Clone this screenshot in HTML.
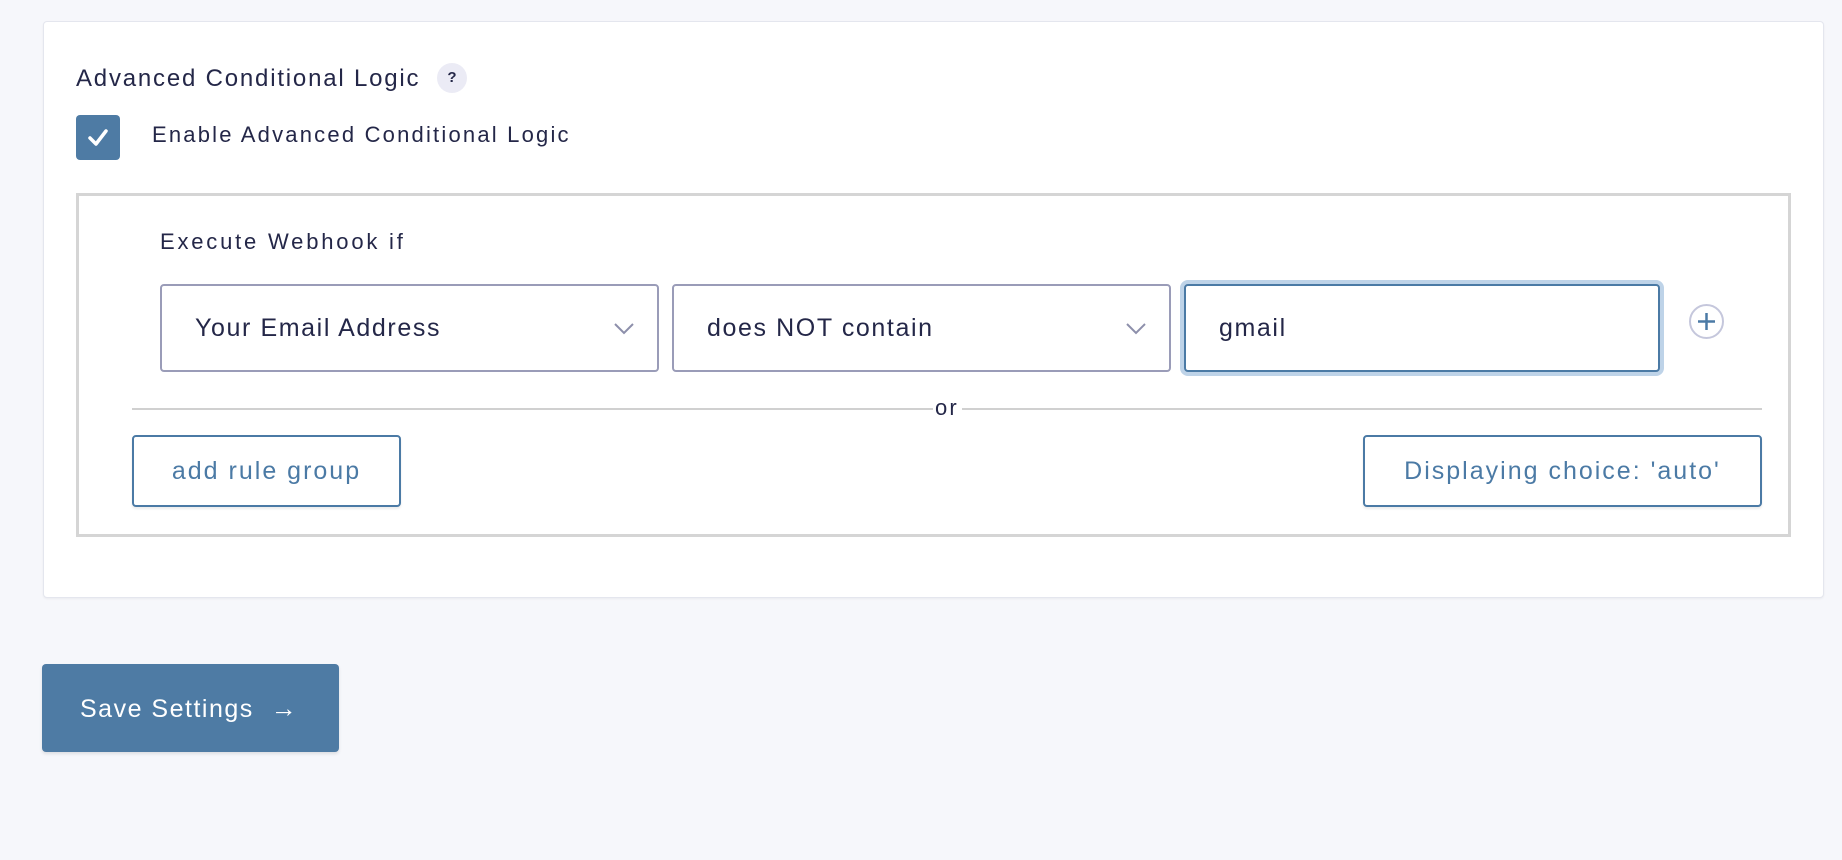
<!DOCTYPE html>
<html><head><style>
*{box-sizing:border-box;margin:0;padding:0}
body{width:1842px;height:860px;background:#f6f7fb;font-family:"Liberation Sans",sans-serif;color:#242748;position:relative;overflow:hidden}
.abs{position:absolute}
.card{left:43px;top:21px;width:1781px;height:577px;background:#fff;border:1px solid #e4e6ee;border-radius:4px;box-shadow:0 1px 2px rgba(0,0,0,.05)}
.t{font-size:22px;white-space:nowrap;letter-spacing:2.2px}
.sel{height:88px;border:2px solid #9a9cb8;border-radius:4px;background:#fff;font-size:25px;padding-left:33px;line-height:84px;letter-spacing:1.6px}
.btn{border:2px solid #4b7aa5;border-radius:4px;color:#4b7aa5;font-size:25px;text-align:center;background:#fff;box-shadow:0 2px 2px rgba(0,0,0,.08);letter-spacing:2px}
</style></head><body>
<div class="abs card"></div>
<div class="abs t" style="left:76px;top:65px;font-size:24px;letter-spacing:1.8px">Advanced Conditional Logic</div>
<div class="abs" style="left:437px;top:63px;width:30px;height:30px;border-radius:50%;background:#ebebf5;font-size:15px;font-weight:bold;text-align:center;line-height:30px">?</div>
<div class="abs" style="left:76px;top:115px;width:44px;height:45px;background:#4e7ba4;border-radius:4px"><svg width="44" height="45"><path d="M14 23 L20 29 L30 16" stroke="#fff" stroke-width="3.5" fill="none" stroke-linecap="round" stroke-linejoin="round"/></svg></div>
<div class="abs t" style="left:152px;top:122px">Enable Advanced Conditional Logic</div>
<div class="abs" style="left:76px;top:193px;width:1715px;height:344px;border:3px solid #d5d5d5"></div>
<div class="abs t" style="left:160px;top:229px;letter-spacing:2.8px">Execute Webhook if</div>
<div class="abs sel" style="left:160px;top:284px;width:499px">Your Email Address<svg class="abs" style="right:22px;top:36px" width="22" height="14"><path d="M2 2 L11 11 L20 2" stroke="#8d8fab" stroke-width="2" fill="none"/></svg></div>
<div class="abs sel" style="left:672px;top:284px;width:499px">does NOT contain<svg class="abs" style="right:22px;top:36px" width="22" height="14"><path d="M2 2 L11 11 L20 2" stroke="#8d8fab" stroke-width="2" fill="none"/></svg></div>
<div class="abs sel" style="left:1184px;top:284px;width:476px;border-color:#4b7aa5;box-shadow:0 0 0 4px #bed3e8">gmail</div>
<div class="abs" style="left:1689px;top:304px;width:35px;height:35px;border-radius:50%;border:2px solid #c5c7dc;"><svg width="31" height="31"><path d="M15.5 7V24M7 15.5H24" stroke="#4b7aa5" stroke-width="2.5"/></svg></div>
<div class="abs" style="left:132px;top:408px;width:801px;height:2px;background:#d0d0d0"></div>
<div class="abs" style="left:962px;top:408px;width:800px;height:2px;background:#d0d0d0"></div>
<div class="abs t" style="left:935px;top:395px">or</div>
<div class="abs btn" style="left:132px;top:435px;width:269px;height:72px;line-height:68px">add rule group</div>
<div class="abs btn" style="left:1363px;top:435px;width:399px;height:72px;line-height:68px">Displaying choice: 'auto'</div>
<div class="abs" style="left:42px;top:664px;width:297px;height:88px;background:#4e7ba4;border-radius:4px;color:#fff;font-size:25px;line-height:88px;padding-left:38px;letter-spacing:1.5px;box-shadow:0 2px 3px rgba(0,0,0,.1)">Save Settings &nbsp;<span style="font-size:26px">→</span></div>
</body></html>
